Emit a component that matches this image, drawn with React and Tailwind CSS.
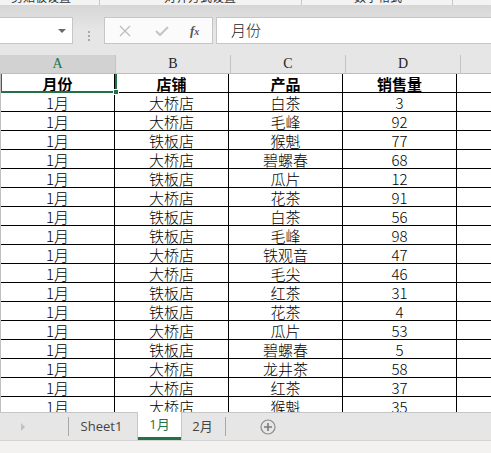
import { useState } from "react";

const rows = [
  ["1月", "大桥店", "白茶", "3"],
  ["1月", "大桥店", "毛峰", "92"],
  ["1月", "铁板店", "猴魁", "77"],
  ["1月", "大桥店", "碧螺春", "68"],
  ["1月", "铁板店", "瓜片", "12"],
  ["1月", "大桥店", "花茶", "91"],
  ["1月", "铁板店", "白茶", "56"],
  ["1月", "铁板店", "毛峰", "98"],
  ["1月", "大桥店", "铁观音", "47"],
  ["1月", "大桥店", "毛尖", "46"],
  ["1月", "铁板店", "红茶", "31"],
  ["1月", "铁板店", "花茶", "4"],
  ["1月", "大桥店", "瓜片", "53"],
  ["1月", "铁板店", "碧螺春", "5"],
  ["1月", "大桥店", "龙井茶", "58"],
  ["1月", "大桥店", "红茶", "37"],
  ["1月", "大桥店", "猴魁", "35"],
];

const cellFont = { fontFamily: '"Noto Sans CJK SC", "Liberation Sans", sans-serif' };

function Row({ cells, bold }) {
  return (
    <div className="flex h-[19px] border-b border-black">
      {cells.map((c, i) => (
        <div
          key={i}
          className={`w-[114px] shrink-0 border-r border-black flex items-center justify-center text-[15px] leading-[15px] text-black pt-px ${bold ? "font-bold" : "font-light"}`}
        >
          {c}
        </div>
      ))}
      <div className="flex-1" />
    </div>
  );
}

export default function App() {
  const [active] = useState("1月");
  const cols = ["A", "B", "C", "D"];

  return (
    <div className="w-[491px] h-[453px] overflow-hidden flex flex-col bg-[#e6e6e6] select-none" style={cellFont}>
      {/* ribbon bottom edge */}
      <div className="h-[5px] shrink-0 bg-[#f3f3f3] relative overflow-hidden flex text-[12px] leading-[14px] text-[#333]">
        <div className="w-[100px] border-r border-[#c8c8c8] pl-[11px] -mt-[10px]">剪贴板设置</div>
        <div className="w-[202px] border-r border-[#c8c8c8] pl-[64px] -mt-[10px]">对齐方式设置</div>
        <div className="w-[151px] border-r border-[#c8c8c8] pl-[52px] -mt-[10px]">数字格式</div>
      </div>

      {/* formula bar */}
      <div className="h-[50px] shrink-0 bg-gradient-to-b from-[#d6d6d6] via-[#e6e6e6] to-[#e6e6e6] pt-[12px] flex">
        <div className="w-[73px] h-[27px] bg-white border border-l-0 border-[#c6c6c6] flex items-center justify-end pr-[6px]">
          <div className="w-0 h-0 border-l-[4px] border-r-[4px] border-t-[4px] border-l-transparent border-r-transparent border-t-[#6b6b6b]" />
        </div>
        <div className="w-[31px] flex flex-col items-center justify-center gap-[2px]">
          <div className="w-[2px] h-[2px] bg-[#a8a8a8]" />
          <div className="w-[2px] h-[2px] bg-[#a8a8a8]" />
          <div className="w-[2px] h-[2px] bg-[#a8a8a8]" />
        </div>
        <div className="w-[109px] h-[27px] bg-[#fbfbfb] border border-[#c6c6c6] flex items-center">
          <svg width="14" height="14" viewBox="0 0 14 14" className="ml-[13px]">
            <path d="M2 2 L12 12 M12 2 L2 12" stroke="#bdbdbd" strokeWidth="1.3" />
          </svg>
          <svg width="16" height="14" viewBox="0 0 16 14" className="ml-[22px]">
            <path d="M2 7 L6 11 L14 3" stroke="#c4c4c4" strokeWidth="2" fill="none" />
          </svg>
          <span
            className="ml-[20px] text-[13px] italic font-bold text-[#555]"
            style={{ fontFamily: '"Liberation Serif", serif' }}
          >
            f<span className="text-[10px]">x</span>
          </span>
        </div>
        <div className="ml-[3px] flex-1 h-[27px] bg-white border border-r-0 border-[#c6c6c6] flex items-center pl-[14px] text-[15px] font-light text-[#222]">
          月份
        </div>
      </div>

      {/* column headers */}
      <div className="h-[19px] shrink-0 flex border-b border-[#bdbdbd] bg-[#e6e6e6]" style={{ fontFamily: '"Liberation Serif", serif' }}>
        {cols.map((c, i) => (
          <div
            key={c}
            className={`${i === 0 ? "w-[116px] bg-[#d2d2d2] text-[#217346]" : "w-[115px] text-[#222]"} shrink-0 border-r border-[#c4c4c4] flex items-center justify-center text-[14px] leading-none`}
          >
            {c}
          </div>
        ))}
        <div className="flex-1" />
      </div>

      {/* grid */}
      <div className="flex-1 bg-white relative overflow-hidden border-l border-[#bfbfbf]">
        <Row cells={["月份", "店铺", "产品", "销售量"]} bold />
        {rows.map((r, i) => (
          <Row key={i} cells={r} />
        ))}
        <div className="absolute left-[-1px] top-[-2px] w-[117px] h-[21px] border-2 border-[#217346]" />
        <div className="absolute left-[112px] top-[15px] w-[6px] h-[6px] bg-[#217346] border border-white" />
      </div>

      {/* sheet tabs */}
      <div
        className="h-[28px] shrink-0 border-t border-[#c6c6c6] bg-[#e6e6e6] flex items-stretch text-[13px]"
        style={{ fontFamily: '"Open Sans", "Noto Sans CJK SC", sans-serif' }}
      >
        <div className="w-[68px] flex items-center pl-[21px]">
          <div className="w-0 h-0 border-t-[4px] border-b-[4px] border-l-[4px] border-t-transparent border-b-transparent border-l-[#c0c0c0]" />
        </div>
        <div className="w-px my-[4px] bg-[#a8a8a8]" />
        <div className="w-[68px] flex items-center justify-center pr-[3px] text-[#444]">Sheet1</div>
        <div
          className={`-mt-px w-[45px] flex items-center justify-center border-x border-[#c6c6c6] pb-[3px] ${active === "1月" ? "bg-white text-[#217346]" : ""}`}
          style={{ boxShadow: "inset 0 -3px 0 #217346" }}
        >
          1月
        </div>
        <div className="w-[43px] flex items-center justify-center pr-[2px] text-[#444]">2月</div>
        <div className="w-px my-[4px] bg-[#a8a8a8]" />
        <div className="w-[84px] flex items-center justify-center">
          <svg width="16" height="16" viewBox="0 0 16 16">
            <circle cx="8" cy="8" r="7" fill="none" stroke="#8a8a8a" strokeWidth="1.2" />
            <path d="M8 4 V12 M4 8 H12" stroke="#7a7a7a" strokeWidth="1.6" />
          </svg>
        </div>
      </div>
      <div className="h-[13px] shrink-0 border-t border-[#d4d4d4] bg-[#f3f2f1]" />
    </div>
  );
}
